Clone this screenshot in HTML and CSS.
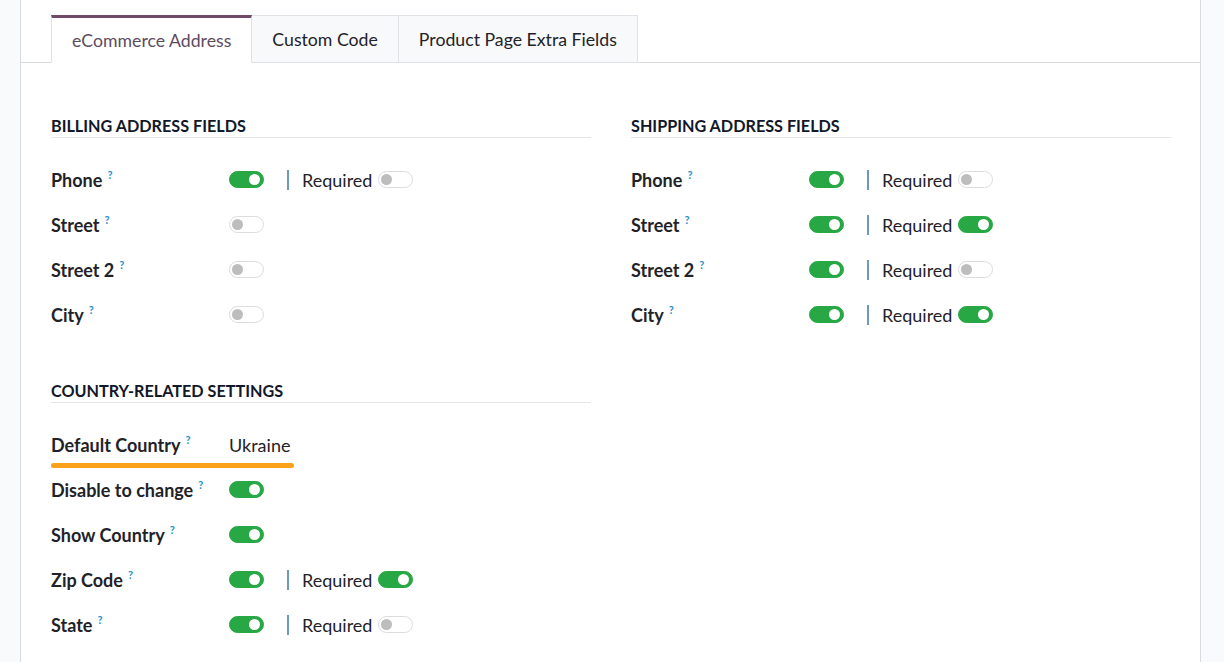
FILE: index.html
```html
<!DOCTYPE html>
<html lang="en">
<head>
<meta charset="utf-8">
<title>Settings</title>
<link rel="stylesheet" href="styles.css">
</head>
<body>
<div class="sheet">
  <div class="tabs">
    <div class="tab active">eCommerce Address</div>
    <div class="tab">Custom Code</div>
    <div class="tab">Product Page Extra Fields</div>
  </div>
  <div class="content">
    <div class="col">
      <div class="group">
        <div class="title">BILLING ADDRESS FIELDS</div>
        <div class="rows">
          <div class="row"><div class="label">Phone<sup class="q">?</sup></div><div class="val"><span class="toggle on"></span><span class="sep"></span><span class="req">Required</span><span class="toggle"></span></div></div>
          <div class="row"><div class="label">Street<sup class="q">?</sup></div><div class="val"><span class="toggle"></span></div></div>
          <div class="row"><div class="label">Street 2<sup class="q">?</sup></div><div class="val"><span class="toggle"></span></div></div>
          <div class="row"><div class="label">City<sup class="q">?</sup></div><div class="val"><span class="toggle"></span></div></div>
        </div>
      </div>
      <div class="group second">
        <div class="title">COUNTRY-RELATED SETTINGS</div>
        <div class="rows">
          <div class="row highlight"><div class="label">Default Country<sup class="q">?</sup></div><div class="val"><span class="text">Ukraine</span></div></div>
          <div class="row"><div class="label">Disable to change<sup class="q">?</sup></div><div class="val"><span class="toggle on"></span></div></div>
          <div class="row"><div class="label">Show Country<sup class="q">?</sup></div><div class="val"><span class="toggle on"></span></div></div>
          <div class="row"><div class="label">Zip Code<sup class="q">?</sup></div><div class="val"><span class="toggle on"></span><span class="sep"></span><span class="req">Required</span><span class="toggle on"></span></div></div>
          <div class="row"><div class="label">State<sup class="q">?</sup></div><div class="val"><span class="toggle on"></span><span class="sep"></span><span class="req">Required</span><span class="toggle"></span></div></div>
        </div>
      </div>
    </div>
    <div class="col">
      <div class="group">
        <div class="title">SHIPPING ADDRESS FIELDS</div>
        <div class="rows">
          <div class="row"><div class="label">Phone<sup class="q">?</sup></div><div class="val"><span class="toggle on"></span><span class="sep"></span><span class="req">Required</span><span class="toggle"></span></div></div>
          <div class="row"><div class="label">Street<sup class="q">?</sup></div><div class="val"><span class="toggle on"></span><span class="sep"></span><span class="req">Required</span><span class="toggle on"></span></div></div>
          <div class="row"><div class="label">Street 2<sup class="q">?</sup></div><div class="val"><span class="toggle on"></span><span class="sep"></span><span class="req">Required</span><span class="toggle"></span></div></div>
          <div class="row"><div class="label">City<sup class="q">?</sup></div><div class="val"><span class="toggle on"></span><span class="sep"></span><span class="req">Required</span><span class="toggle on"></span></div></div>
        </div>
      </div>
    </div>
  </div>
</div>
</body>
</html>
```

FILE: styles.css
```css
html, body {
  margin: 0;
  padding: 0;
}
body {
  background: #f9fafb;
  font-family: "Lato", "Open Sans", sans-serif;
  color: #1f2328;
  height: 662px;
  overflow: hidden;
}
.sheet {
  margin-left: 20px;
  width: 1179px;
  height: 662px;
  background: #ffffff;
  border-left: 1px solid #d8dadd;
  border-right: 1px solid #d8dadd;
}
.tabs {
  display: flex;
  padding: 15px 0 0 30px;
  border-bottom: 1px solid #d8dadd;
}
.tab {
  height: 48px;
  box-sizing: border-box;
  padding: 0 20px;
  display: flex;
  align-items: center;
  font-size: 17.7px;
  color: #1f2328;
  background: #f8f9fa;
  border: 1px solid #dee2e6;
  border-left: none;
  margin-bottom: -1px;
}
.tab.active {
  background: #ffffff;
  color: #5e4c5e;
  border: 1px solid #dee2e6;
  border-top: 3px solid #714b67;
  border-bottom: 1px solid #ffffff;
}
.content {
  display: grid;
  grid-template-columns: 540px 540px;
  column-gap: 40px;
  padding: 53px 0 0 30px;
}
.group.second {
  margin-top: 44px;
}
.title {
  font-size: 16.2px;
  font-weight: 700;
  line-height: 20px;
  padding-bottom: 1px;
  border-bottom: 1px solid #e4e5e7;
  color: #111827;
}
.rows {
  margin-top: 19px;
}
.row {
  display: flex;
  align-items: center;
  height: 45px;
  position: relative;
}
.row.highlight {
  width: 243px;
}
.row.highlight::after {
  content: "";
  position: absolute;
  left: 0;
  right: 0;
  bottom: -1px;
  height: 5px;
  border-radius: 3px;
  background: #f9a11b;
}
.label {
  width: 178px;
  flex: none;
  font-size: 18px;
  font-weight: 700;
  color: #1f2328;
}
.q {
  font-size: 11px;
  font-weight: 700;
  color: #1f8fc7;
  margin-left: 5px;
  vertical-align: 8px;
  line-height: 0;
}
.val {
  display: flex;
  align-items: center;
  font-size: 18px;
}
.text {
  color: #1f2328;
}
.toggle {
  width: 35px;
  height: 17px;
  box-sizing: border-box;
  border-radius: 9px;
  border: 1px solid #dcdcdc;
  background: #ffffff;
  position: relative;
  flex: none;
}
.toggle::before {
  content: "";
  position: absolute;
  top: 2px;
  left: 2px;
  width: 11px;
  height: 11px;
  border-radius: 50%;
  background: #bdbdbd;
}
.toggle.on {
  background: #28a745;
  border-color: #28a745;
}
.toggle.on::before {
  left: auto;
  right: 3px;
  background: #ffffff;
}
.sep {
  width: 2px;
  height: 20px;
  background: #6d98c2;
  margin: 0 13px 0 23px;
}
.req {
  color: #1f2328;
  margin-right: 6px;
}
```
